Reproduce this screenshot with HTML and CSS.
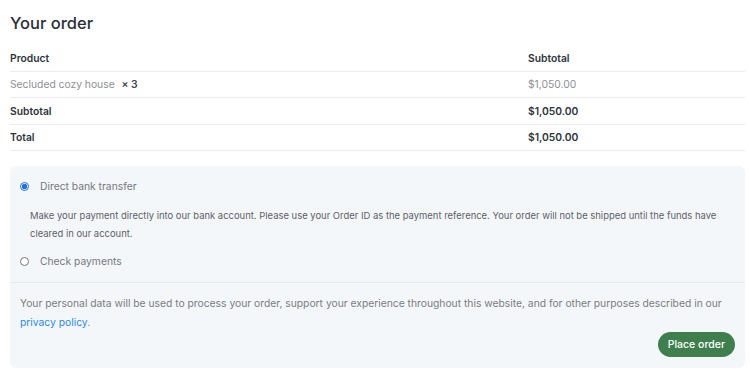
FILE: index.html
```html
<!DOCTYPE html>
<html lang="en">
<head>
  <meta charset="UTF-8">
  <meta name="viewport" content="width=device-width, initial-scale=1.0">
  <title>Checkout - Your order</title>
  <link rel="stylesheet" href="styles.css">
</head>
<body>
  <div class="checkout">
    <h3 class="order-title">Your order</h3>

    <table class="order-table">
      <thead>
        <tr>
          <th class="col-product">Product</th>
          <th class="col-total">Subtotal</th>
        </tr>
      </thead>
      <tbody>
        <tr class="cart-item">
          <td>Secluded cozy house <strong class="qty">&times; 3</strong></td>
          <td>$1,050.00</td>
        </tr>
      </tbody>
      <tfoot>
        <tr>
          <th>Subtotal</th>
          <td><strong>$1,050.00</strong></td>
        </tr>
        <tr>
          <th>Total</th>
          <td><strong>$1,050.00</strong></td>
        </tr>
      </tfoot>
    </table>

    <!-- Payment methods -->
    <div class="payment">
      <ul class="payment-methods">
        <li class="method">
          <label class="method-label">
            <input type="radio" name="payment_method" checked>
            <span>Direct bank transfer</span>
          </label>
          <div class="method-box">
            Make your payment directly into our bank account. Please use your Order ID as the payment reference. Your order will not be shipped until the funds have cleared in our account.
          </div>
        </li>
        <li class="method">
          <label class="method-label">
            <input type="radio" name="payment_method">
            <span>Check payments</span>
          </label>
        </li>
      </ul>

      <div class="place-order">
        <p class="privacy">
          Your personal data will be used to process your order, support your experience throughout this website, and for other purposes described in our <a href="#">privacy policy</a>.
        </p>
        <div class="actions">
          <button class="btn-place" type="button">Place order</button>
        </div>
      </div>
    </div>
  </div>
</body>
</html>
```

FILE: styles.css
```css
body {
  font-family: Inter, 'Noto Sans', sans-serif;
  margin: 0;
  padding: 0 5px 8px 10px;
  background-color: #fff;
  color: #333a44;
}
.order-title {
  font-size: 16.5px;
  font-weight: 500;
  color: #2b3038;
  margin: 0;
  padding: 12px 0 11px;
  line-height: 22px;
}
.order-table {
  width: 100%;
  border-collapse: collapse;
  font-size: 10.3px;
}
.order-table th,
.order-table td {
  text-align: left;
  padding: 0;
  height: 25.5px;
  border-bottom: 1px solid #ececec;
  vertical-align: middle;
}
.order-table th {
  font-weight: 600;
  color: #2f343c;
}
.col-product {
  width: 518px;
}
.cart-item td {
  color: #8d8f94;
}
.qty {
  color: #3a3f47;
  font-weight: 600;
  margin-left: 4px;
}
.order-table tfoot strong {
  color: #2f343c;
  font-weight: 600;
}
.payment {
  margin-top: 15px;
  background-color: #f4f7fa;
  border-radius: 6px;
  color: #6b6f76;
}
.payment-methods {
  list-style: none;
  margin: 0;
  padding: 9px 0 10px;
  border-bottom: 1px solid #e4e8ec;
}
.method-label {
  display: flex;
  align-items: center;
  height: 22px;
  padding-left: 10px;
  font-size: 10.3px;
  color: #757981;
}
.method-label input {
  margin: 0 11px 0 0;
  width: 9px;
  height: 9px;
  accent-color: #1f6fe5;
}
.method-box {
  padding: 10px 10px 4px 20px;
  font-size: 9.45px;
  line-height: 18px;
  color: #5d6169;
}
.method + .method {
  margin-top: 3px;
}
.place-order {
  padding: 11px 10px 11px;
}
.privacy {
  margin: 0;
  font-size: 10.3px;
  line-height: 19px;
  color: #797d84;
}
.privacy a {
  color: #2a8ce6;
  text-decoration: none;
}
.actions {
  display: flex;
  justify-content: flex-end;
}
.btn-place {
  font-family: inherit;
  font-size: 10.5px;
  font-weight: 500;
  color: #fff;
  background-color: #3f7f4e;
  border: none;
  border-radius: 13px;
  height: 25px;
  padding: 0 10px;
}
```
